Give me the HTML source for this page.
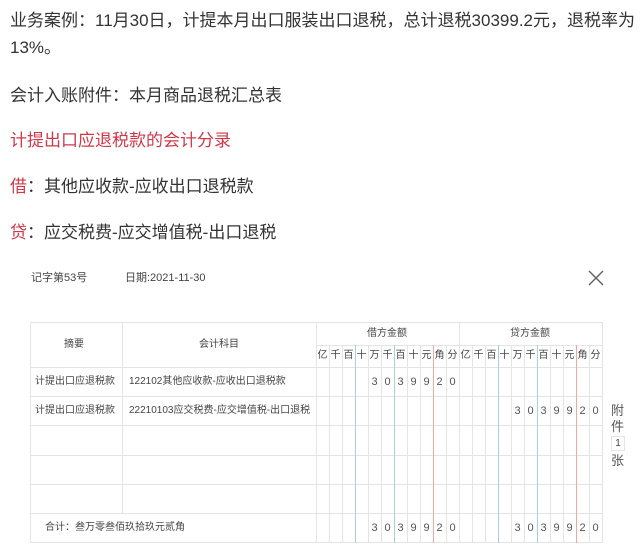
<!DOCTYPE html>
<html><head><meta charset="utf-8"><style>
body{margin:0;width:640px;height:550px;background:#fff;position:relative;overflow:hidden;font-family:"Liberation Sans","Noto Sans CJK SC",sans-serif;}
.p{position:absolute;left:10px;font-size:17px;color:#333;white-space:nowrap;line-height:26px}
.r{color:#d0384a}
.v,.h{position:absolute;background:#e4e4e4}
.v{width:1px}.h{height:1px}
.b{background:#a8d0ec!important}.rd{background:#f2a5a5!important}
.t{position:absolute;font-size:10px;color:#444;white-space:nowrap;line-height:12px}
.d{position:absolute;font-size:11px;color:#555;width:13px;text-align:center;line-height:12px}
.hd{position:absolute;top:350px;font-size:10px;color:#444;width:13px;text-align:center;line-height:12px}
</style></head><body>
<div class="p" style="top:8px">业务案例：11月30日，计提本月出口服装出口退税，总计退税30399.2元，退税率为</div>
<div class="p" style="top:35px">13%。</div>
<div class="p" style="top:83px">会计入账附件：本月商品退税汇总表</div>
<div class="p r" style="top:128px">计提出口应退税款的会计分录</div>
<div class="p" style="top:174px"><span class="r">借</span>：其他应收款-应收出口退税款</div>
<div class="p" style="top:220px"><span class="r">贷</span>：应交税费-应交增值税-出口退税</div>

<div class="t" style="left:31px;top:272px;font-size:11px">记字第53号</div>
<div class="t" style="left:125px;top:272px;font-size:11px">日期:2021-11-30</div>
<svg style="position:absolute;left:588px;top:270px" width="16" height="16"><path d="M1 1L15 15M15 1L1 15" stroke="#666" stroke-width="1.5"/></svg>

<div class="h" style="left:30px;width:573px;top:322px"></div>
<div class="h" style="left:316px;width:287px;top:345px"></div>
<div class="h" style="left:30px;width:573px;top:367px"></div>
<div class="h" style="left:30px;width:573px;top:396px"></div>
<div class="h" style="left:30px;width:573px;top:425px"></div>
<div class="h" style="left:30px;width:573px;top:455px"></div>
<div class="h" style="left:30px;width:573px;top:484px"></div>
<div class="h" style="left:30px;width:573px;top:513px"></div>
<div class="h" style="left:30px;width:573px;top:542px"></div>
<div class="v" style="left:30px;top:322px;height:221px"></div>
<div class="v" style="left:122px;top:322px;height:191px"></div>
<div class="v" style="left:316px;top:322px;height:221px"></div>
<div class="v" style="left:459px;top:322px;height:221px"></div>
<div class="v" style="left:602px;top:322px;height:221px"></div>
<div class="v" style="left:329px;top:345px;height:198px"></div>
<div class="v" style="left:342px;top:345px;height:198px"></div>
<div class="v b" style="left:355px;top:345px;height:198px"></div>
<div class="v" style="left:368px;top:345px;height:198px"></div>
<div class="v" style="left:381px;top:345px;height:198px"></div>
<div class="v b" style="left:394px;top:345px;height:198px"></div>
<div class="v" style="left:407px;top:345px;height:198px"></div>
<div class="v" style="left:420px;top:345px;height:198px"></div>
<div class="v rd" style="left:433px;top:345px;height:198px"></div>
<div class="v" style="left:446px;top:345px;height:198px"></div>
<div class="v" style="left:472px;top:345px;height:198px"></div>
<div class="v" style="left:485px;top:345px;height:198px"></div>
<div class="v b" style="left:498px;top:345px;height:198px"></div>
<div class="v" style="left:511px;top:345px;height:198px"></div>
<div class="v" style="left:524px;top:345px;height:198px"></div>
<div class="v b" style="left:537px;top:345px;height:198px"></div>
<div class="v" style="left:550px;top:345px;height:198px"></div>
<div class="v" style="left:563px;top:345px;height:198px"></div>
<div class="v rd" style="left:576px;top:345px;height:198px"></div>
<div class="v" style="left:589px;top:345px;height:198px"></div>

<div class="t" style="left:64px;top:339px">摘要</div>
<div class="t" style="left:199px;top:339px">会计科目</div>
<div class="t" style="left:367px;top:328px">借方金额</div>
<div class="t" style="left:510px;top:328px">贷方金额</div>
<div class="hd" style="left:316px">亿</div><div class="hd" style="left:329px">千</div><div class="hd" style="left:342px">百</div><div class="hd" style="left:355px">十</div><div class="hd" style="left:368px">万</div><div class="hd" style="left:381px">千</div><div class="hd" style="left:394px">百</div><div class="hd" style="left:407px">十</div><div class="hd" style="left:420px">元</div><div class="hd" style="left:433px">角</div><div class="hd" style="left:446px">分</div>
<div class="hd" style="left:459px">亿</div><div class="hd" style="left:472px">千</div><div class="hd" style="left:485px">百</div><div class="hd" style="left:498px">十</div><div class="hd" style="left:511px">万</div><div class="hd" style="left:524px">千</div><div class="hd" style="left:537px">百</div><div class="hd" style="left:550px">十</div><div class="hd" style="left:563px">元</div><div class="hd" style="left:576px">角</div><div class="hd" style="left:589px">分</div>

<div class="t" style="left:35px;top:376px">计提出口应退税款</div>
<div class="t" style="left:129px;top:376px">122102其他应收款-应收出口退税款</div>
<div class="t" style="left:35px;top:405px">计提出口应退税款</div>
<div class="t" style="left:129px;top:405px">22210103应交税费-应交增值税-出口退税</div>
<div class="t" style="left:45px;top:522px">合计：叁万零叁佰玖拾玖元贰角</div>

<div class="d" style="left:368px;top:376px">3</div><div class="d" style="left:381px;top:376px">0</div><div class="d" style="left:394px;top:376px">3</div><div class="d" style="left:407px;top:376px">9</div><div class="d" style="left:420px;top:376px">9</div><div class="d" style="left:433px;top:376px">2</div><div class="d" style="left:446px;top:376px">0</div>
<div class="d" style="left:511px;top:405px">3</div><div class="d" style="left:524px;top:405px">0</div><div class="d" style="left:537px;top:405px">3</div><div class="d" style="left:550px;top:405px">9</div><div class="d" style="left:563px;top:405px">9</div><div class="d" style="left:576px;top:405px">2</div><div class="d" style="left:589px;top:405px">0</div>
<div class="d" style="left:368px;top:522px">3</div><div class="d" style="left:381px;top:522px">0</div><div class="d" style="left:394px;top:522px">3</div><div class="d" style="left:407px;top:522px">9</div><div class="d" style="left:420px;top:522px">9</div><div class="d" style="left:433px;top:522px">2</div><div class="d" style="left:446px;top:522px">0</div>
<div class="d" style="left:511px;top:522px">3</div><div class="d" style="left:524px;top:522px">0</div><div class="d" style="left:537px;top:522px">3</div><div class="d" style="left:550px;top:522px">9</div><div class="d" style="left:563px;top:522px">9</div><div class="d" style="left:576px;top:522px">2</div><div class="d" style="left:589px;top:522px">0</div>

<div class="t" style="left:611px;top:403px;font-size:13px;line-height:16px;color:#555">附<br>件</div>
<div style="position:absolute;left:611px;top:436px;width:12px;height:13px;border:1px solid #e4e4e4;font-size:10px;text-align:center;line-height:13px;color:#444">1</div>
<div class="t" style="left:611px;top:453px;font-size:13px;line-height:16px;color:#555">张</div>
</body></html>
